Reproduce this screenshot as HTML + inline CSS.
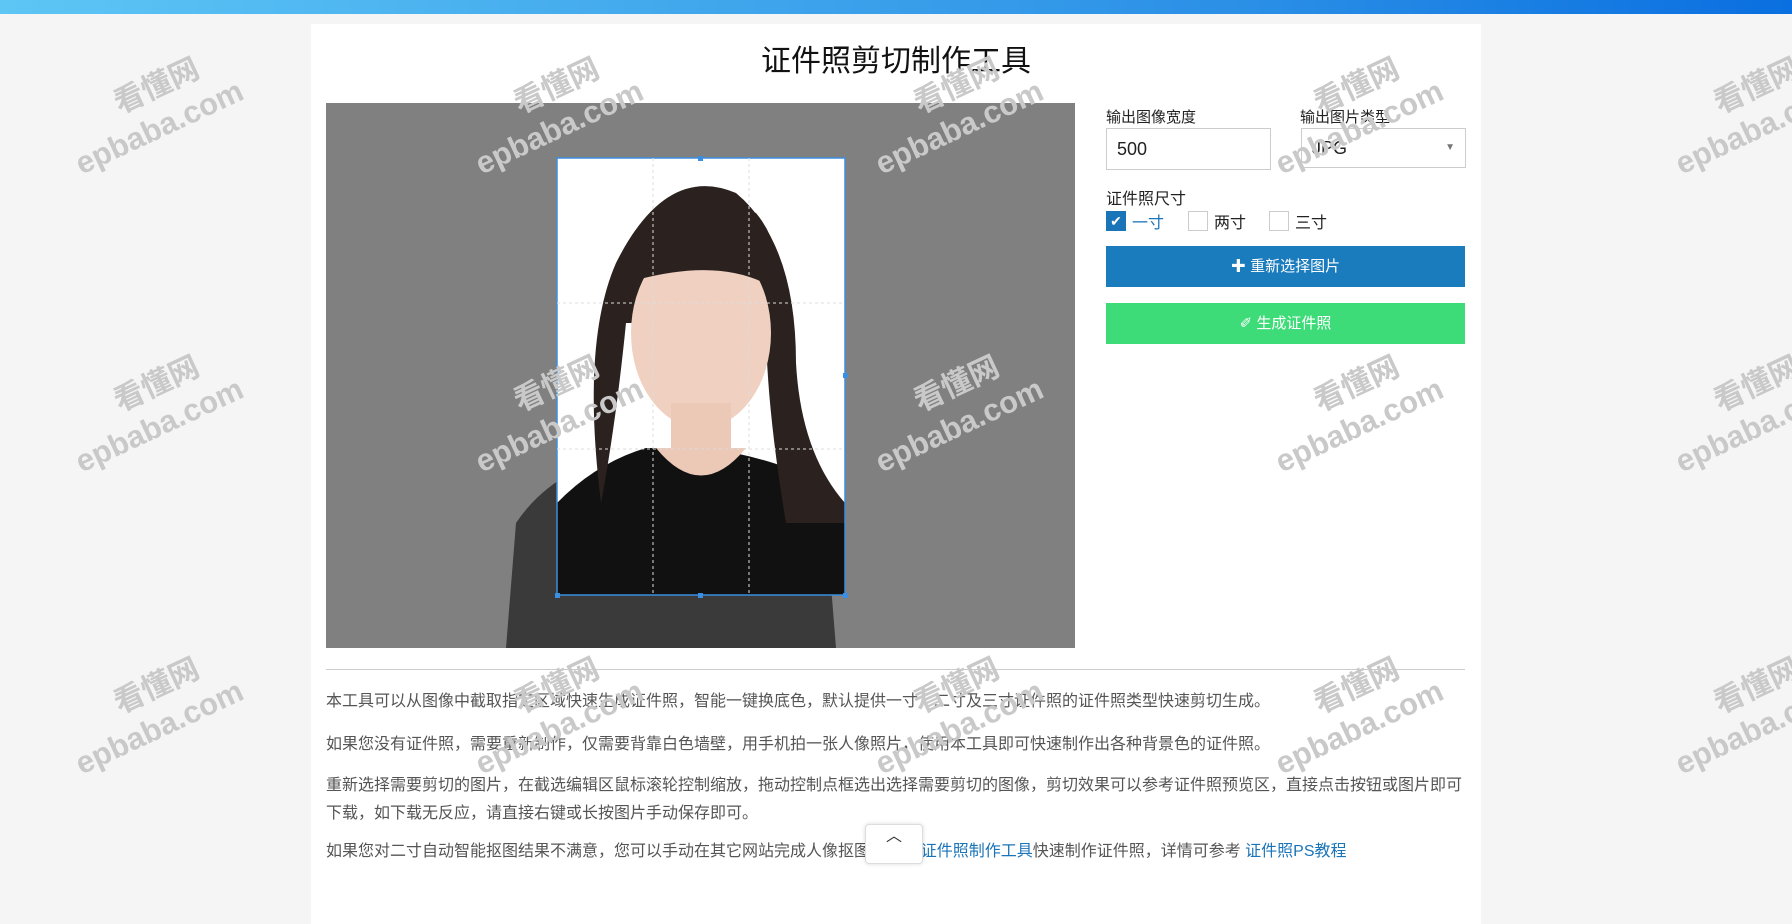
<!DOCTYPE html>
<html><head><meta charset="utf-8"><style>
*{margin:0;padding:0;box-sizing:border-box}
body{width:1792px;height:854px;overflow:hidden;background:#f5f5f5;font-family:"Liberation Sans","Noto Sans CJK SC",sans-serif;position:relative}
.top{position:absolute;left:0;top:0;width:1792px;height:14px;background:linear-gradient(90deg,#5ec6f5,#2a8fe6 70%,#0a6fe0)}
.card{position:absolute;left:311px;top:24px;width:1170px;height:900px;background:#fff}
h1{position:absolute;left:0;width:1170px;top:36px;text-align:center;font-weight:normal;font-size:30px;color:#111}
.lbl{position:absolute;font-size:15px;color:#222}
.box{position:absolute;border:1px solid #ccc;font-size:18px;color:#222;padding-left:10px;line-height:40px;background:#fff}
.cb{position:absolute;width:20px;height:20px;border:1px solid #ccc;background:#fff}
.btn{position:absolute;left:1106px;width:359px;height:41px;color:#fff;font-size:15px;text-align:center;line-height:41px}
p{position:absolute;left:326px;width:1140px;font-size:16px;color:#555;line-height:28px}
.wm{position:absolute;width:240px;text-align:center;color:#c9c9c9;transform:rotate(-25deg);font-size:30px;line-height:38px;z-index:5;pointer-events:none;font-weight:bold}
.wm span{display:block}
.wm .e{font-size:31px;margin-left:-30px}
</style></head><body>
<div class="top"></div>
<div class="card"></div>
<h1 style="left:311px;top:36px">证件照剪切制作工具</h1>
<div style="position:absolute;left:326px;top:103px;width:749px;height:545px;background:#808080;overflow:hidden">
<svg width="749" height="545" viewBox="0 0 749 545">
<path d="M180 545 L190 420 Q230 360 320 345 L320 300 L380 300 L380 345 Q470 360 500 420 L510 545Z" fill="#3a3a3a"/>
<rect x="231" y="55" width="288" height="437" fill="#fff"/>
<path d="M231 492 L231 400 Q270 360 320 345 L380 345 Q480 360 519 400 L519 492Z" fill="#111"/>
<path d="M275 400 Q255 240 290 160 Q340 60 410 90 Q470 140 470 260 Q475 350 519 400 L519 420 L460 420 Q440 300 440 220 L300 220 Q290 320 275 400Z" fill="#2b2220"/>
<ellipse cx="375" cy="230" rx="70" ry="95" fill="#f0d0c0"/>
<path d="M300 170 Q340 90 430 110 Q455 140 455 190 Q400 150 300 180Z" fill="#2b2220"/>
<rect x="345" y="300" width="60" height="50" fill="#ecc8b6"/>
<path d="M330 345 Q375 400 420 345Z" fill="#ecc8b6"/>
<rect x="231" y="55" width="288" height="437" fill="none" stroke="#3b8ee0" stroke-width="1.5"/>
<g stroke="#ddd" stroke-dasharray="3,3"><line x1="327" y1="55" x2="327" y2="492"/><line x1="423" y1="55" x2="423" y2="492"/><line x1="231" y1="200" x2="519" y2="200"/><line x1="231" y1="346" x2="519" y2="346"/></g>
<g fill="#3b8ee0"><rect x="229" y="490" width="5" height="5"/><rect x="517" y="490" width="5" height="5"/><rect x="372" y="490" width="5" height="5"/><rect x="372" y="53" width="5" height="5"/><rect x="517" y="270" width="5" height="5"/></g>
</svg></div>
<div class="lbl" style="left:1106px;top:106px">输出图像宽度</div>
<div class="lbl" style="left:1300px;top:106px">输出图片类型</div>
<div class="box" style="left:1106px;top:128px;width:165px;height:42px">500</div>
<div class="box" style="left:1301px;top:128px;width:165px;height:40px;line-height:38px">JPG<span style="position:absolute;right:10px;font-size:10px;color:#777">▼</span></div>
<div class="lbl" style="left:1106px;top:185px;font-size:16px">证件照尺寸</div>
<div class="cb" style="left:1106px;top:211px;background:#1a74b8;border-color:#1a74b8;color:#fff;font-size:14px;line-height:18px;text-align:center">✔</div>
<div class="lbl" style="left:1132px;top:209px;font-size:16px;color:#1a74b8">一寸</div>
<div class="cb" style="left:1188px;top:211px"></div>
<div class="lbl" style="left:1214px;top:209px;font-size:16px">两寸</div>
<div class="cb" style="left:1269px;top:211px"></div>
<div class="lbl" style="left:1295px;top:209px;font-size:16px">三寸</div>
<div class="btn" style="top:246px;background:#1a7bbd"><b>✚</b> 重新选择图片</div>
<div class="btn" style="top:303px;background:#3ddc78">✐ 生成证件照</div>
<div style="position:absolute;left:326px;top:669px;width:1139px;height:1px;background:#ccc"></div>
<p style="top:688px">本工具可以从图像中截取指定区域快速生成证件照，智能一键换底色，默认提供一寸，二寸及三寸证件照的证件照类型快速剪切生成。</p>
<p style="top:731px">如果您没有证件照，需要重新制作，仅需要背靠白色墙壁，用手机拍一张人像照片，使用本工具即可快速制作出各种背景色的证件照。</p>
<p style="top:772px">重新选择需要剪切的图片，在截选编辑区鼠标滚轮控制缩放，拖动控制点框选出选择需要剪切的图像，剪切效果可以参考证件照预览区，直接点击按钮或图片即可下载，如下载无反应，请直接右键或长按图片手动保存即可。</p>
<p style="top:838px">如果您对二寸自动智能抠图结果不满意，您可以手动在其它网站完成人像抠图，<span style="color:#1a74b8">PNG证件照制作工具</span>快速制作证件照，详情可参考 <span style="color:#1a74b8">证件照PS教程</span></p>
<div style="position:absolute;left:865px;top:824px;width:58px;height:40px;background:#fff;border:1px solid #ddd;border-radius:4px;text-align:center;font-size:16px;color:#333;line-height:24px;box-shadow:0 0 4px rgba(0,0,0,.15)">︿</div>
<div class="wm" style="left:45px;top:66px"><span>看懂网</span><span class="e">epbaba.com</span></div>
<div class="wm" style="left:445px;top:66px"><span>看懂网</span><span class="e">epbaba.com</span></div>
<div class="wm" style="left:845px;top:66px"><span>看懂网</span><span class="e">epbaba.com</span></div>
<div class="wm" style="left:1245px;top:66px"><span>看懂网</span><span class="e">epbaba.com</span></div>
<div class="wm" style="left:1645px;top:66px"><span>看懂网</span><span class="e">epbaba.com</span></div>
<div class="wm" style="left:45px;top:364px"><span>看懂网</span><span class="e">epbaba.com</span></div>
<div class="wm" style="left:445px;top:364px"><span>看懂网</span><span class="e">epbaba.com</span></div>
<div class="wm" style="left:845px;top:364px"><span>看懂网</span><span class="e">epbaba.com</span></div>
<div class="wm" style="left:1245px;top:364px"><span>看懂网</span><span class="e">epbaba.com</span></div>
<div class="wm" style="left:1645px;top:364px"><span>看懂网</span><span class="e">epbaba.com</span></div>
<div class="wm" style="left:45px;top:666px"><span>看懂网</span><span class="e">epbaba.com</span></div>
<div class="wm" style="left:445px;top:666px"><span>看懂网</span><span class="e">epbaba.com</span></div>
<div class="wm" style="left:845px;top:666px"><span>看懂网</span><span class="e">epbaba.com</span></div>
<div class="wm" style="left:1245px;top:666px"><span>看懂网</span><span class="e">epbaba.com</span></div>
<div class="wm" style="left:1645px;top:666px"><span>看懂网</span><span class="e">epbaba.com</span></div>
</body></html>
